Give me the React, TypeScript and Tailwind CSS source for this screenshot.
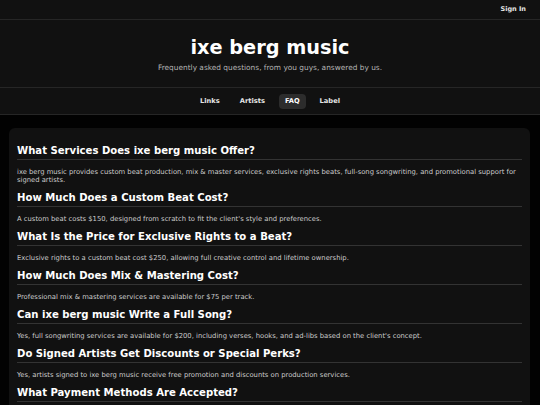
import React from "react";

const faqs: [string, string][] = [
  [
    "What Services Does ixe berg music Offer?",
    "ixe berg music provides custom beat production, mix & master services, exclusive rights beats, full-song songwriting, and promotional support for signed artists.",
  ],
  [
    "How Much Does a Custom Beat Cost?",
    "A custom beat costs $150, designed from scratch to fit the client's style and preferences.",
  ],
  [
    "What Is the Price for Exclusive Rights to a Beat?",
    "Exclusive rights to a custom beat cost $250, allowing full creative control and lifetime ownership.",
  ],
  [
    "How Much Does Mix & Mastering Cost?",
    "Professional mix & mastering services are available for $75 per track.",
  ],
  [
    "Can ixe berg music Write a Full Song?",
    "Yes, full songwriting services are available for $200, including verses, hooks, and ad-libs based on the client's concept.",
  ],
  [
    "Do Signed Artists Get Discounts or Special Perks?",
    "Yes, artists signed to ixe berg music receive free promotion and discounts on production services.",
  ],
  [
    "What Payment Methods Are Accepted?",
    "Payments are accepted via PayPal, Cash App, and other secure methods.",
  ],
];

export default function App() {
  return (
    <div
      className="h-[405px] overflow-hidden bg-[#020202] text-white"
      style={{ fontFamily: '"DejaVu Sans", Verdana, sans-serif' }}
    >
      <div className="flex h-[20px] items-center justify-end border-b border-[#262626] bg-[#111111] pr-[14px]">
        <span className="text-[6.5px] font-bold text-[#e5e5e5]">Sign In</span>
      </div>
      <div className="flex h-[68px] flex-col items-center justify-center border-b border-[#262626] bg-[#111111] pt-[2px]">
        <h1 className="text-[19.3px] font-bold leading-[24px] text-white">ixe berg music</h1>
        <p className="mt-[3px] text-[7.4px] leading-[10px] text-[#b5b5b5]">
          Frequently asked questions, from you guys, answered by us.
        </p>
      </div>
      <nav className="flex h-[27px] items-center justify-center gap-[8px] border-b border-[#262626] bg-[#111111]">
        {["Links", "Artists", "FAQ", "Label"].map((t) => (
          <span
            key={t}
            className={
              t === "FAQ"
                ? "rounded-[4px] bg-[#2c2c2c] px-[6px] py-[3px] text-[6.7px] font-bold leading-[9px] text-white"
                : "px-[6px] py-[3px] text-[6.7px] font-bold leading-[9px] text-[#e5e5e5]"
            }
          >
            {t}
          </span>
        ))}
      </nav>
      <div className="pl-[9px] pr-[10px] pt-[13px]">
        <div className="rounded-[6px] bg-[#111111] px-[8px] pb-[10px] pt-[9px]">
          {faqs.map(([q, a]) => (
            <div key={q}>
              <h2 className="mt-[8px] border-b border-[#333333] pb-[2px] text-[10.1px] font-bold leading-[12px] text-white">
                {q}
              </h2>
              <p className="mt-[8px] text-[6.8px] leading-[8px] text-[#cccccc]">{a}</p>
            </div>
          ))}
        </div>
      </div>
    </div>
  );
}
